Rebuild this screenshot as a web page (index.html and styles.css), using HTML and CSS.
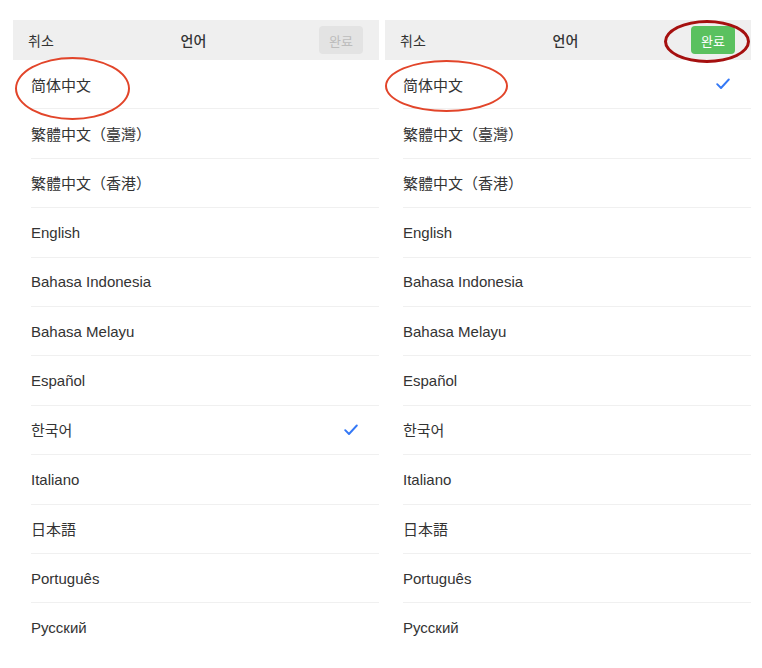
FILE: index.html
```html
<!DOCTYPE html>
<html lang="ko">
<head>
    <meta charset="UTF-8">
    <meta name="viewport" content="width=device-width, initial-scale=1.0">
    <title>언어</title>
    <link rel="stylesheet" href="styles.css">
</head>
<body>
    <div class="screens">
        <!-- Before: Korean selected -->
        <div class="panel">
            <div class="nav-bar">
                <span class="nav-cancel">취소</span>
                <span class="nav-title">언어</span>
                <button class="done-btn" disabled>완료</button>
            </div>
            <ul class="lang-list">
                <li>简体中文</li>
                <li>繁體中文（臺灣）</li>
                <li>繁體中文（香港）</li>
                <li>English</li>
                <li>Bahasa Indonesia</li>
                <li>Bahasa Melayu</li>
                <li>Español</li>
                <li class="selected">한국어
                    <svg class="check" width="14" height="12" viewBox="0 0 14 12"><polyline points="1.2,6.2 5,10 12.8,1.5" fill="none" stroke="#3478f6" stroke-width="1.9" stroke-linecap="round" stroke-linejoin="round"/></svg>
                </li>
                <li>Italiano</li>
                <li>日本語</li>
                <li>Português</li>
                <li>Русский</li>
            </ul>
            <span class="mark mark-lang-left"></span>
        </div>

        <!-- After: Simplified Chinese selected -->
        <div class="panel">
            <div class="nav-bar">
                <span class="nav-cancel">취소</span>
                <span class="nav-title">언어</span>
                <button class="done-btn active">완료</button>
            </div>
            <ul class="lang-list">
                <li class="selected">简体中文
                    <svg class="check" width="14" height="12" viewBox="0 0 14 12"><polyline points="1.2,6.2 5,10 12.8,1.5" fill="none" stroke="#3478f6" stroke-width="1.9" stroke-linecap="round" stroke-linejoin="round"/></svg>
                </li>
                <li>繁體中文（臺灣）</li>
                <li>繁體中文（香港）</li>
                <li>English</li>
                <li>Bahasa Indonesia</li>
                <li>Bahasa Melayu</li>
                <li>Español</li>
                <li>한국어</li>
                <li>Italiano</li>
                <li>日本語</li>
                <li>Português</li>
                <li>Русский</li>
            </ul>
            <span class="mark mark-lang-right"></span>
            <span class="mark mark-done"></span>
        </div>
    </div>
</body>
</html>
```

FILE: styles.css
```css
body {
    font-family: 'Liberation Sans', 'Noto Sans CJK KR', 'Noto Sans CJK SC', sans-serif;
    background-color: #fff;
    color: #333;
    margin: 0;
    padding: 0;
}

.screens {
    display: flex;
    gap: 6px;
    padding: 20px 0 0 13px;
}

.panel {
    position: relative;
    width: 366px;
}

/* Navigation bar */
.nav-bar {
    display: flex;
    align-items: center;
    justify-content: space-between;
    height: 40px;
    padding: 0 16px 0 15px;
    background-color: #efefef;
}

.nav-cancel,
.nav-title {
    font-size: 14px;
    color: #333;
}

.nav-title {
    font-weight: 500;
    margin-left: 14px;
}

.done-btn {
    width: 44px;
    height: 28px;
    border: none;
    border-radius: 4px;
    font-family: inherit;
    font-size: 13px;
    padding: 0;
    background-color: #e3e3e3;
    color: #bcbcbc;
}

.done-btn.active {
    background-color: #5ac15f;
    color: #fff;
}

/* Language list */
.lang-list {
    list-style: none;
    margin: 0;
    padding: 0;
}

.lang-list li {
    display: flex;
    align-items: center;
    justify-content: space-between;
    height: 48.4px;
    margin-left: 18px;
    padding-right: 21px;
    border-bottom: 1px solid #f0f0f0;
    font-size: 15px;
    color: #333;
}

.lang-list li:last-child {
    border-bottom: none;
}

.check {
    display: block;
}

/* Red annotation rings */
.mark {
    position: absolute;
    border-radius: 50%;
    pointer-events: none;
}

.mark-lang-left {
    left: 2px;
    top: 37px;
    width: 111px;
    height: 59px;
    border: 2px solid #e2452a;
}

.mark-lang-right {
    left: 0;
    top: 40px;
    width: 119px;
    height: 48px;
    border: 2px solid #e2452a;
}

.mark-done {
    left: 279px;
    top: 0;
    width: 80px;
    height: 37px;
    border: 3.5px solid #a5100f;
}
```
